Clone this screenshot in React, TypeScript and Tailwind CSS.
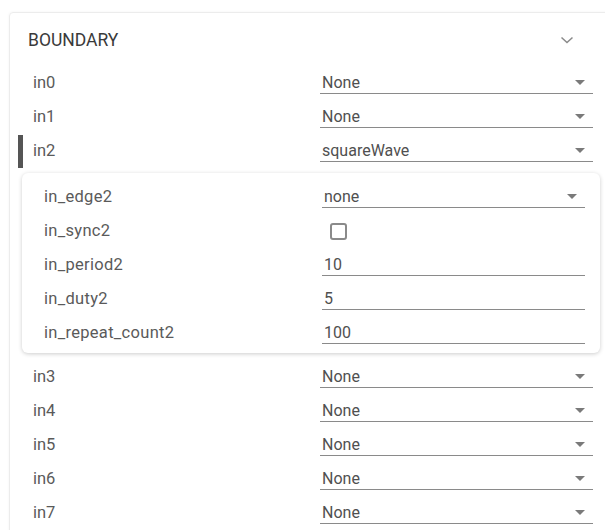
import React from "react";

type SelectRow = { name: string; value: string; active?: boolean };

const topRows: SelectRow[] = [
  { name: "in0", value: "None" },
  { name: "in1", value: "None" },
  { name: "in2", value: "squareWave", active: true },
];

const bottomRows: SelectRow[] = [
  { name: "in3", value: "None" },
  { name: "in4", value: "None" },
  { name: "in5", value: "None" },
  { name: "in6", value: "None" },
  { name: "in7", value: "None" },
];

function Caret() {
  return (
    <svg width="10" height="5" viewBox="0 0 10 5" className="shrink-0">
      <path d="M0 0 L10 0 L5 5 Z" fill="#7a7a7a" />
    </svg>
  );
}

function SelectField({ value, width }: { value: string; width: string }) {
  return (
    <div className={`${width} h-[22px] flex items-center justify-between border-b border-[#8a8a8a] pl-[2px] pr-[8px]`}>
      <span className="text-[#505050]">{value}</span>
      <Caret />
    </div>
  );
}

function TextField({ value }: { value: string }) {
  return (
    <div className="w-[263px] h-[22px] flex items-center border-b border-[#8a8a8a] pl-[2px]">
      <span className="text-[#505050]">{value}</span>
    </div>
  );
}

function Row({ row }: { row: SelectRow }) {
  return (
    <div className="h-[34px] flex items-center pl-[8px]">
      <div className={`w-[5px] h-[33px] ${row.active ? "bg-[#555]" : "bg-transparent"}`} />
      <div className="w-[297px] pl-[10px] text-[16.5px] text-[#5a5a5a]">{row.name}</div>
      <SelectField value={row.value} width="w-[273px]" />
    </div>
  );
}

function SubRow({ label, children }: { label: string; children: React.ReactNode }) {
  return (
    <div className="h-[34px] flex items-center">
      <div className="w-[300px] pl-[22px] text-[16.5px] tracking-[0.3px] text-[#5a5a5a]">{label}</div>
      {children}
    </div>
  );
}

export default function App() {
  return (
    <div
      className="w-[605px] h-[530px] overflow-hidden bg-white text-[16px] leading-[20px]"
      style={{ fontFamily: "Roboto, 'Liberation Sans', sans-serif" }}
    >
      <div className="ml-[9px] mt-[12px] w-[620px] rounded-tl-[4px] border border-[#ececec] shadow-[0_0_3px_rgba(0,0,0,0.05)]">
        {/* section header */}
        <div className="h-[53px] flex items-center justify-between pl-[18px] pr-[54px]">
          <span className="text-[17.5px] text-[#3a3a3a]">BOUNDARY</span>
          <svg width="14" height="8" viewBox="0 0 14 8">
            <path d="M1.5 1.5 L7 6.5 L12.5 1.5" fill="none" stroke="#8a8a8a" strokeWidth="1.5" />
          </svg>
        </div>

        {topRows.map((r) => (
          <Row key={r.name} row={r} />
        ))}

        {/* expanded parameters for the selected waveform */}
        <div className="ml-[12px] mt-[5px] w-[578px] rounded-[6px] bg-white pt-[7px] pb-[3px] shadow-[0_1px_4px_rgba(0,0,0,0.2)]">
          <SubRow label="in_edge2">
            <SelectField value="none" width="w-[263px]" />
          </SubRow>
          <SubRow label="in_sync2">
            <div className="ml-[8px] w-[17px] h-[17px] rounded-[3px] border-2 border-[#8a8a8a]" />
          </SubRow>
          <SubRow label="in_period2">
            <TextField value="10" />
          </SubRow>
          <SubRow label="in_duty2">
            <TextField value="5" />
          </SubRow>
          <SubRow label="in_repeat_count2">
            <TextField value="100" />
          </SubRow>
        </div>

        <div className="mt-[7px]">
          {bottomRows.map((r) => (
            <Row key={r.name} row={r} />
          ))}
        </div>
      </div>
    </div>
  );
}
